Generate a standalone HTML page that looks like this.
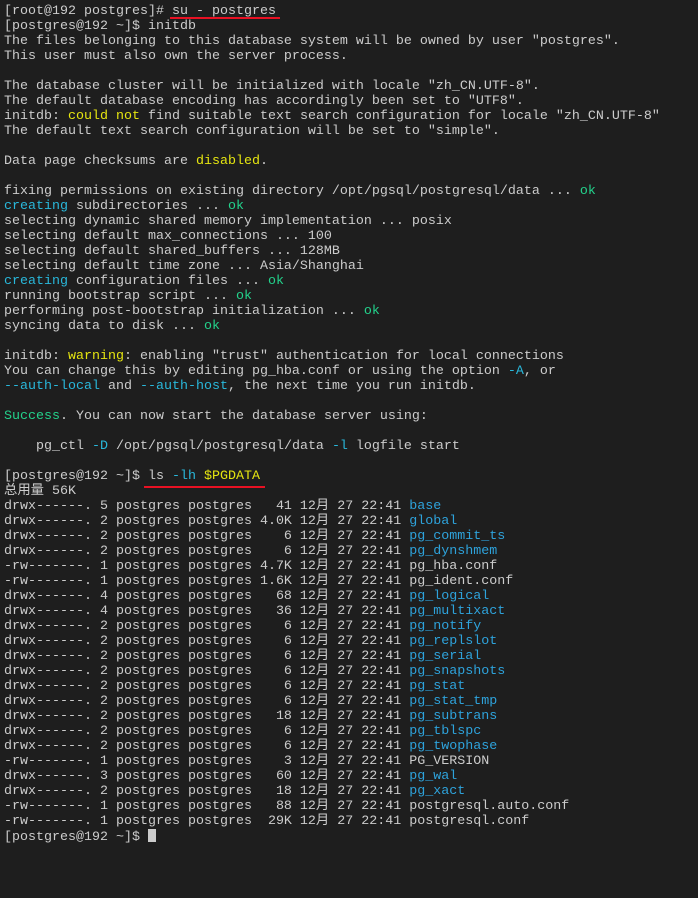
<!DOCTYPE html>
<html><head><meta charset="utf-8"><style>
html,body{margin:0;padding:0;background:#1e1e1e;width:698px;height:898px;overflow:hidden}
pre{margin:0;position:absolute;left:4px;top:4px;font-family:"Liberation Mono","Noto Sans CJK SC",monospace;font-size:13.33px;line-height:15px;color:#cccccc}
.y{color:#e5e510}.g{color:#23d18b}.c{color:#29b8db}.b{color:#2ea3dc}
.u{position:absolute;height:2px;background:#e81123}
.cur{display:inline-block;width:8px;height:13px;background:#cccccc;vertical-align:-2px}
</style></head><body>
<pre>[root@192 postgres]# su - postgres
[postgres@192 ~]$ initdb
The files belonging to this database system will be owned by user "postgres".
This user must also own the server process.

The database cluster will be initialized with locale "zh_CN.UTF-8".
The default database encoding has accordingly been set to "UTF8".
initdb: <span class="y">could not</span> find suitable text search configuration for locale "zh_CN.UTF-8"
The default text search configuration will be set to "simple".

Data page checksums are <span class="y">disabled</span>.

fixing permissions on existing directory /opt/pgsql/postgresql/data ... <span class="g">ok</span>
<span class="c">creating</span> subdirectories ... <span class="g">ok</span>
selecting dynamic shared memory implementation ... posix
selecting default max_connections ... 100
selecting default shared_buffers ... 128MB
selecting default time zone ... Asia/Shanghai
<span class="c">creating</span> configuration files ... <span class="g">ok</span>
running bootstrap script ... <span class="g">ok</span>
performing post-bootstrap initialization ... <span class="g">ok</span>
syncing data to disk ... <span class="g">ok</span>

initdb: <span class="y">warning</span>: enabling "trust" authentication for local connections
You can change this by editing pg_hba.conf or using the option <span class="c">-A</span>, or
<span class="c">--auth-local</span> and <span class="c">--auth-host</span>, the next time you run initdb.

<span class="g">Success</span>. You can now start the database server using:

    pg_ctl <span class="c">-D</span> /opt/pgsql/postgresql/data <span class="c">-l</span> logfile start

[postgres@192 ~]$ ls <span class="c">-lh</span> <span class="y">$PGDATA</span>
总用量 56K
drwx------. 5 postgres postgres   41 12月 27 22:41 <span class="b">base</span>
drwx------. 2 postgres postgres 4.0K 12月 27 22:41 <span class="b">global</span>
drwx------. 2 postgres postgres    6 12月 27 22:41 <span class="b">pg_commit_ts</span>
drwx------. 2 postgres postgres    6 12月 27 22:41 <span class="b">pg_dynshmem</span>
-rw-------. 1 postgres postgres 4.7K 12月 27 22:41 pg_hba.conf
-rw-------. 1 postgres postgres 1.6K 12月 27 22:41 pg_ident.conf
drwx------. 4 postgres postgres   68 12月 27 22:41 <span class="b">pg_logical</span>
drwx------. 4 postgres postgres   36 12月 27 22:41 <span class="b">pg_multixact</span>
drwx------. 2 postgres postgres    6 12月 27 22:41 <span class="b">pg_notify</span>
drwx------. 2 postgres postgres    6 12月 27 22:41 <span class="b">pg_replslot</span>
drwx------. 2 postgres postgres    6 12月 27 22:41 <span class="b">pg_serial</span>
drwx------. 2 postgres postgres    6 12月 27 22:41 <span class="b">pg_snapshots</span>
drwx------. 2 postgres postgres    6 12月 27 22:41 <span class="b">pg_stat</span>
drwx------. 2 postgres postgres    6 12月 27 22:41 <span class="b">pg_stat_tmp</span>
drwx------. 2 postgres postgres   18 12月 27 22:41 <span class="b">pg_subtrans</span>
drwx------. 2 postgres postgres    6 12月 27 22:41 <span class="b">pg_tblspc</span>
drwx------. 2 postgres postgres    6 12月 27 22:41 <span class="b">pg_twophase</span>
-rw-------. 1 postgres postgres    3 12月 27 22:41 PG_VERSION
drwx------. 3 postgres postgres   60 12月 27 22:41 <span class="b">pg_wal</span>
drwx------. 2 postgres postgres   18 12月 27 22:41 <span class="b">pg_xact</span>
-rw-------. 1 postgres postgres   88 12月 27 22:41 postgresql.auto.conf
-rw-------. 1 postgres postgres  29K 12月 27 22:41 postgresql.conf
[postgres@192 ~]$ <span class="cur"></span></pre>
<div class="u" style="left:170px;top:17px;width:110px"></div>
<div class="u" style="left:144px;top:486px;width:121px"></div>
</body></html>
